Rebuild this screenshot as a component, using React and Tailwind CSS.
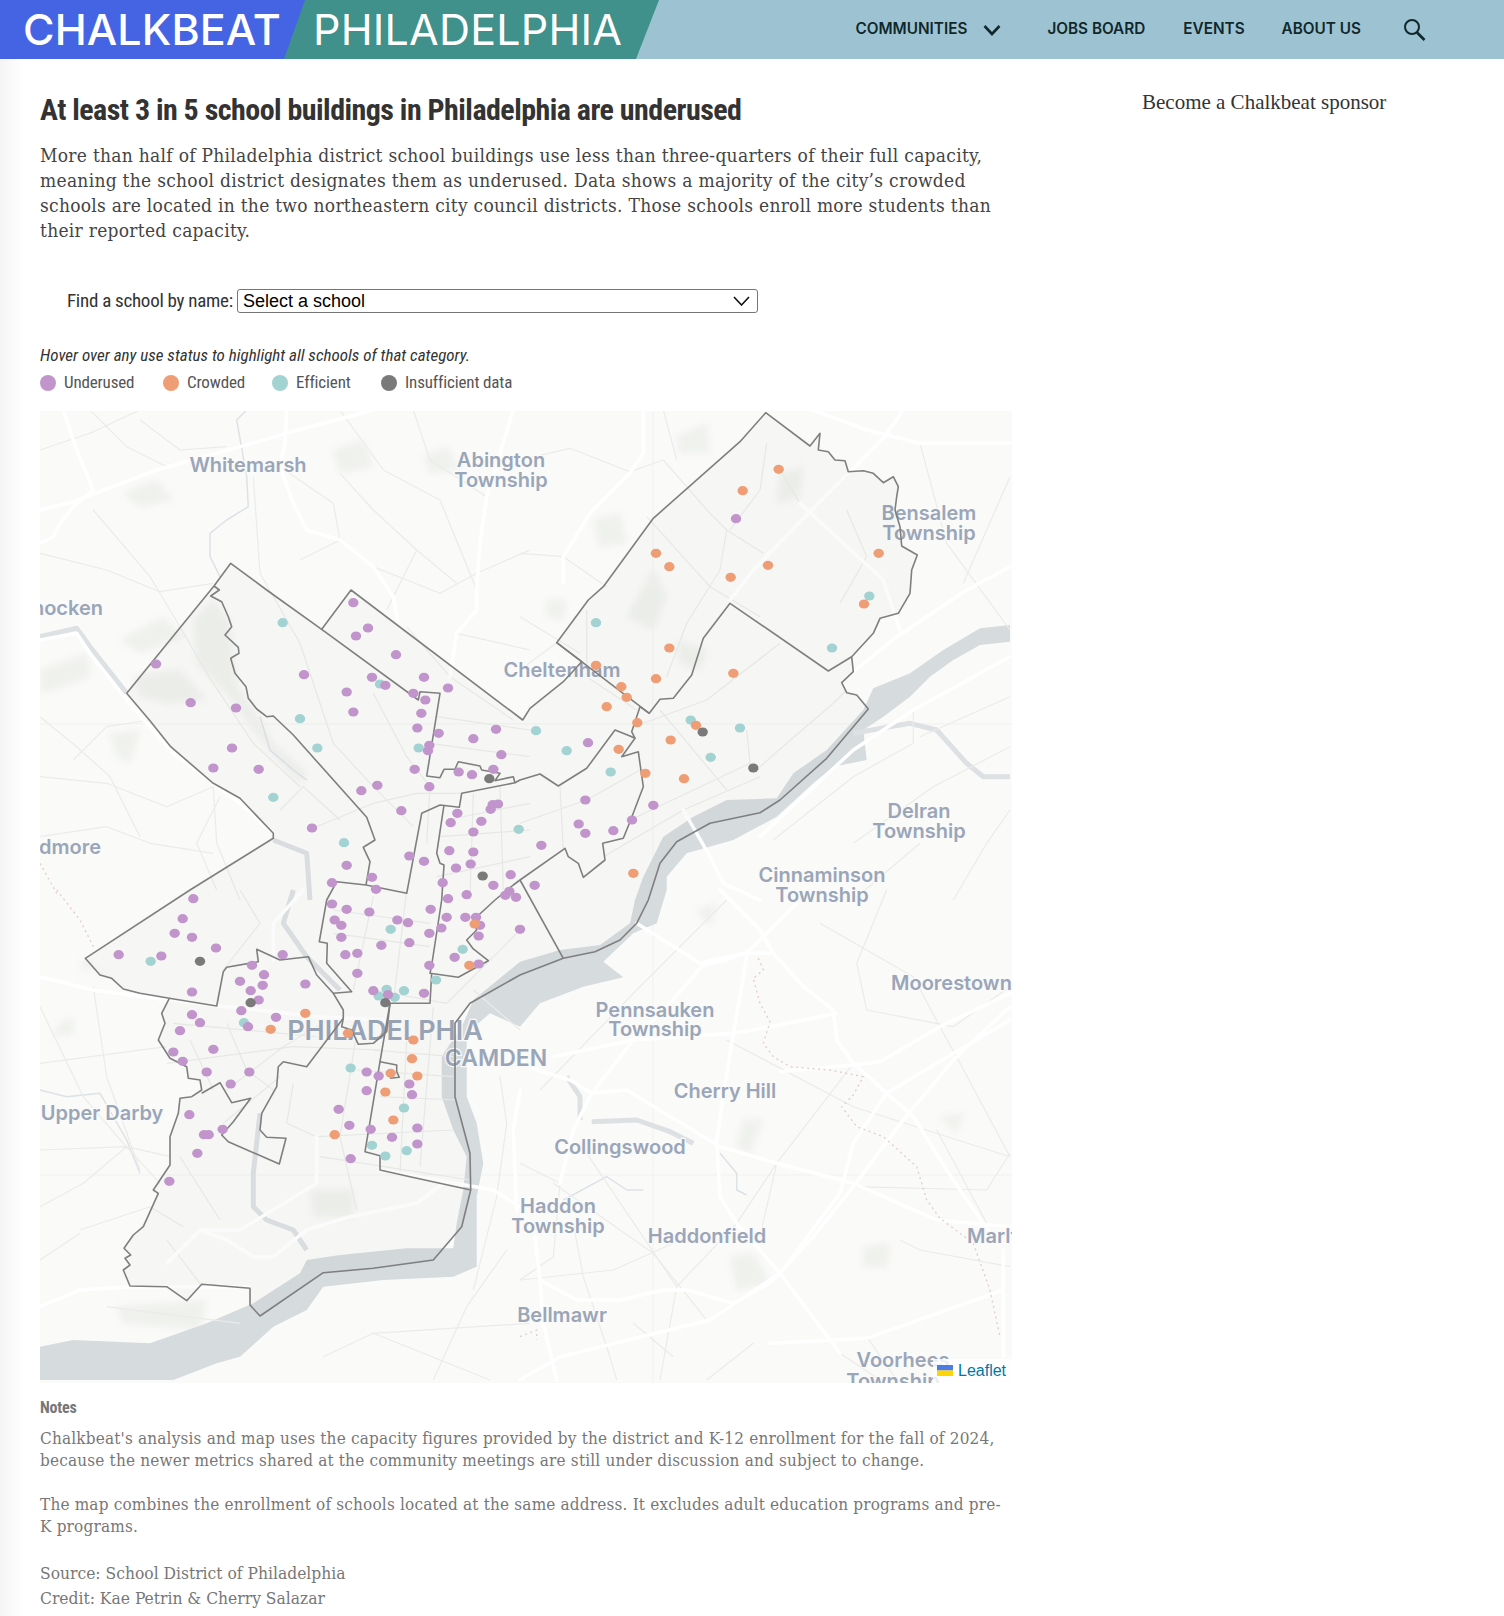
import React from "react";

// zoom frames of the map, each maps to page px at 1/3 scale
const FRAMES = { A: [40, 410], B: [520, 410], C: [40, 890], D: [520, 890] };
const pt = (f, [x, y]) => [FRAMES[f][0] + x / 3, FRAMES[f][1] + y / 3];
const seg = (f, pts) => pts.map((p) => pt(f, p));
const toD = (pts, close) =>
  "M" + pts.map(([x, y]) => `${x.toFixed(1)} ${y.toFixed(1)}`).join("L") + (close ? "Z" : "");
const line = (f, pts) => toD(seg(f, pts));

const cityOutline = [
  ...seg("A", [[572, 460], [680, 540], [845, 658], [933, 540], [1448, 930]]),
  ...seg("B", [[30, 895], [130, 815], [185, 755], [110, 698], [205, 570], [250, 530], [400, 325], [660, 95], [737, 8], [870, 108], [900, 70], [895, 120], [925, 125], [945, 150], [975, 152], [985, 185], [1030, 182], [1060, 190], [1090, 218], [1120, 200], [1135, 230], [1130, 260], [1125, 300], [1140, 350], [1145, 408], [1192, 435], [1175, 480], [1170, 550], [1135, 610], [1080, 625], [1060, 670], [995, 740], [1000, 785], [965, 818], [980, 848], [1010, 855], [1045, 897], [920, 1045], [780, 1170], [720, 1208], [570, 1240], [470, 1295], [420, 1360], [385, 1470]]),
  ...seg("D", [[350, 100], [300, 150], [225, 185], [130, 205], [0, 255]]),
  ...seg("C", [[1290, 340], [1245, 400], [1245, 620], [1290, 790], [1292, 900], [1265, 1010], [1180, 1110], [1000, 1135], [850, 1148], [660, 1278], [630, 1245], [630, 1195], [485, 1183], [440, 1232], [380, 1190], [270, 1188], [250, 1140], [270, 1125], [255, 1105], [272, 1095], [252, 1075], [280, 1035], [310, 1010], [355, 910], [340, 900], [390, 825], [390, 740], [415, 670], [420, 625], [455, 620], [485, 600], [480, 570], [445, 565], [440, 530], [390, 505], [355, 450], [375, 400], [365, 370], [388, 325], [300, 310], [250, 297], [215, 265], [180, 255], [136, 205], [450, 0]]),
  ...seg("A", [[700, 1285], [700, 1270], [600, 1165], [520, 1120], [392, 1010], [330, 932], [260, 850], [522, 528]]),
];

const innerLines = [
  line("A", [[522, 528], [538, 540], [512, 558], [545, 575], [565, 620], [575, 650], [555, 675], [595, 712], [597, 730], [572, 745], [585, 790], [618, 830], [625, 865], [650, 897], [680, 920], [700, 918], [760, 975], [980, 1222], [1005, 1290], [970, 1312], [990, 1355], [978, 1425]]),
  toD([
    ...seg("A", [[845, 658], [1135, 870], [1140, 845], [1200, 850], [1160, 1098], [1200, 1103], [1212, 1078], [1245, 1078], [1255, 1055], [1320, 1068], [1325, 1080], [1380, 1090], [1365, 1112], [1420, 1100], [1425, 1118], [1265, 1150], [1258, 1192], [1200, 1185], [1145, 1210], [1100, 1450], [978, 1425], [890, 1415]]),
    ...seg("C", [[860, 30], [838, 155], [862, 160], [860, 220], [935, 305], [880, 310], [910, 360], [910, 385], [800, 530], [730, 515], [715, 530], [710, 590], [665, 670], [660, 720], [680, 742], [738, 745], [718, 822], [565, 755], [545, 735], [580, 695], [632, 625], [575, 638], [540, 578], [485, 610]]),
  ]),
  line("C", [[388, 325], [530, 348], [550, 245], [560, 232], [655, 215], [650, 178], [720, 210], [805, 200], [830, 255], [880, 310]]),
  toD([
    ...seg("A", [[1425, 1118]]),
    ...seg("B", [[0, 1110], [60, 1092], [115, 1128], [200, 1075], [285, 960], [330, 978], [345, 985], [305, 1040], [355, 1025], [370, 1130], [330, 1235], [310, 1285], [248, 1300], [255, 1350], [190, 1402], [175, 1360], [145, 1340], [135, 1315], [0, 1410]]),
    ...seg("A", [[1420, 1425]]),
    ...seg("C", [[1365, 30], [1300, 90], [1310, 120], [1280, 150], [1298, 175], [1345, 212], [1255, 262], [1170, 250], [1175, 225], [1205, 30]]),
    ...seg("A", [[1212, 1365], [1200, 1360], [1190, 1330], [1212, 1185]]),
  ]),
  line("B", [[345, 985], [335, 965], [360, 890], [388, 910]]),
  line("B", [[110, 698], [388, 910], [420, 868], [460, 865], [515, 795], [550, 685], [630, 580], [925, 783], [995, 740]]),
  line("C", [[910, 385], [905, 410], [935, 420], [955, 463], [1000, 460], [1040, 425], [1050, 340], [1170, 340], [1175, 250]]),
  line("C", [[1050, 340], [1020, 515], [1070, 525], [1070, 545], [1078, 562], [1050, 565]]),
  line("C", [[1020, 515], [975, 785], [1020, 797], [1020, 840], [1110, 860], [1292, 900]]),
  toD([...seg("B", [[0, 1410]]), ...seg("D", [[130, 205]])]),
];

// Delaware river, one closed shape
const river = toD(
  [
    ...seg("B", [[1470, 645], [1380, 655], [1270, 720], [1170, 790], [1060, 835], [1030, 900], [920, 1020], [820, 1090], [770, 1165], [620, 1170], [520, 1220], [430, 1280], [370, 1400], [345, 1470]]),
    ...seg("D", [[330, 100], [240, 165], [120, 180], [0, 215]]),
    ...seg("C", [[1300, 330], [1270, 400], [1205, 500], [1205, 620], [1240, 720], [1280, 800], [1270, 900], [1250, 1000], [1240, 1075], [1100, 1075], [900, 1095], [800, 1110], [780, 1150], [640, 1240], [500, 1300], [330, 1360], [100, 1350], [0, 1370], [0, 1470], [330, 1470], [400, 1470], [530, 1420], [600, 1400], [700, 1310], [800, 1260], [850, 1190], [1030, 1170], [1240, 1160], [1310, 1130], [1310, 920], [1330, 820], [1310, 700], [1280, 620], [1280, 430], [1350, 370]]),
    ...seg("D", [[0, 410], [60, 340], [190, 290], [310, 262], [250, 215], [340, 130], [410, 100], [440, 0]]),
    ...seg("B", [[440, 1400], [500, 1330], [640, 1290], [770, 1220], [880, 1120], [940, 1070], [1040, 1050], [1030, 960], [1090, 920], [1170, 860], [1230, 800], [1300, 750], [1380, 705], [1470, 695]]),
  ],
  true
);

const smallWater = [
  line("A", [[0, 680], [110, 655], [150, 710], [260, 850]]),
  line("A", [[700, 1290], [800, 1330], [810, 1470]]),
  line("C", [[760, 0], [730, 100], [800, 200], [900, 300]]),
  line("C", [[660, 670], [640, 850], [640, 950], [680, 990], [760, 1020], [800, 1080]]),
  line("B", [[1000, 970], [1170, 940], [1250, 960], [1340, 1060], [1390, 1100], [1470, 1100]]),
  line("D", [[215, 695], [350, 690], [450, 725], [520, 760]]),
  line("D", [[140, 560], [180, 620], [180, 690]]),
];

const thinWater = [
  line("A", [[620, 0], [590, 30], [620, 200], [625, 290], [560, 330], [510, 370], [510, 440], [540, 500]]),
  line("A", [[660, 920], [690, 1020], [760, 1080], [800, 1110]]),
  line("D", [[600, 790], [650, 850], [650, 900], [680, 915]]),
  line("D", [[130, 930], [260, 860], [320, 900], [370, 900]]),
  line("C", [[0, 600], [80, 620], [180, 610], [260, 750], [300, 850]]),
];

const majorRoads = [
  line("A", [[0, 300], [100, 275], [350, 180], [600, 110], [740, 70], [1000, 0]]),
  line("A", [[70, 0], [110, 120], [160, 240], [100, 290], [60, 340], [40, 380], [0, 400]]),
  line("A", [[740, 0], [735, 100], [720, 170], [760, 280], [800, 360], [900, 390], [1000, 470], [1060, 560], [1075, 640]]),
  line("A", [[0, 690], [110, 670], [150, 730], [260, 870], [400, 1030], [600, 1180], [700, 1270]]),
  line("A", [[1420, 0], [1340, 260], [1320, 400], [1310, 540], [1310, 600], [1250, 670], [1230, 800]]),
  line("B", [[880, 0], [1040, 60], [1200, 100], [1470, 100]]),
  line("B", [[1150, 0], [1090, 85], [870, 305], [700, 480], [630, 570]]),
  line("B", [[840, 280], [1090, 510], [1140, 660]]),
  line("B", [[1470, 470], [1340, 540], [1130, 680], [970, 810]]),
  line("B", [[370, 0], [370, 130], [330, 190], [210, 310], [130, 440], [130, 520]]),
  line("B", [[490, 1200], [570, 1340], [610, 1420], [720, 1470]]),
  line("B", [[1470, 740], [1180, 900], [1000, 1020], [720, 1280]]),
  line("D", [[600, 0], [720, 120], [760, 190], [850, 290], [940, 360], [950, 450], [1000, 520], [1180, 680], [1300, 870], [1430, 1060]]),
  line("D", [[1470, 350], [1300, 510], [1150, 690], [1000, 890], [880, 1040], [750, 1180], [640, 1240], [500, 1200], [430, 1200], [300, 1230], [170, 1230], [60, 1170]]),
  line("D", [[1470, 390], [1300, 490], [1100, 610], [1000, 760], [960, 910], [780, 1150]]),
  line("D", [[350, 100], [540, 220], [620, 200], [690, 190], [760, 190]]),
  line("D", [[830, 40], [690, 180], [620, 210], [550, 225], [450, 340], [340, 450], [215, 610], [160, 720], [120, 880]]),
  line("D", [[215, 610], [320, 600], [600, 770], [770, 820], [1000, 880], [1250, 990], [1470, 1010]]),
  line("D", [[0, 510], [50, 540], [150, 570], [215, 610]]),
  line("D", [[100, 500], [340, 450], [640, 430], [750, 410], [950, 370]]),
  line("D", [[780, 545], [1000, 525], [1080, 515], [1260, 410], [1470, 310]]),
  line("D", [[680, 200], [630, 490], [590, 750], [600, 920], [650, 1000], [780, 1150], [960, 1390]]),
  line("D", [[45, 1040], [60, 1170], [70, 1300], [110, 1470]]),
  line("D", [[0, 1470], [120, 1400], [570, 1290], [780, 1150]]),
  line("D", [[750, 1360], [1040, 1345], [1450, 1200]]),
  line("D", [[1450, 1080], [1450, 1400]]),
  line("C", [[0, 260], [160, 300], [380, 330], [830, 380], [1030, 390]]),
  line("C", [[480, 1020], [560, 1050], [640, 1100], [700, 1100], [800, 1020], [930, 980], [1130, 940], [1210, 880]]),
  line("C", [[0, 1250], [120, 1200], [270, 1190], [630, 1190]]),
  line("C", [[830, 740], [830, 880], [600, 1020], [480, 1020], [380, 1120]]),
  line("C", [[1020, 840], [1360, 900], [1440, 950]]),
  line("C", [[1440, 600], [1420, 720], [1430, 960]]),
  line("C", [[790, 0], [700, 100], [700, 210]]),
];

const minorRoads = [
  line("A", [[0, 120], [150, 70], [300, 0]]), line("A", [[160, 300], [330, 500], [420, 650], [500, 790], [640, 1000], [780, 1130]]),
  line("A", [[0, 430], [200, 480], [360, 545], [520, 520]]), line("A", [[640, 200], [660, 490], [780, 700], [880, 1000], [1000, 1130], [1120, 1250]]),
  line("A", [[900, 0], [1030, 180], [1200, 270], [1310, 540]]), line("A", [[1000, 470], [1200, 550], [1310, 490], [1470, 420]]),
  line("A", [[780, 450], [900, 390], [880, 280], [720, 170]]), line("A", [[1100, 650], [1230, 800], [1420, 930]]),
  line("A", [[0, 1100], [200, 1120], [380, 1190], [520, 1130]]), line("A", [[0, 1280], [200, 1250], [330, 1300], [520, 1330]]),
  line("A", [[520, 1130], [530, 1300], [600, 1470]]), line("A", [[100, 1050], [200, 950], [330, 930]]),
  line("A", [[830, 1250], [1000, 1180], [1130, 1150], [1265, 1150]]), line("A", [[1190, 920], [1470, 960]]),
  line("A", [[1170, 1000], [1470, 1040]]), line("A", [[1000, 850], [1100, 1040], [1170, 1130], [1160, 1300]]),
  line("A", [[720, 1200], [790, 1130], [900, 1230]]), line("A", [[1220, 1230], [1470, 1180]]),
  line("A", [[1200, 1280], [1470, 1260]]), line("A", [[1190, 1400], [1470, 1340]]),
  line("A", [[1300, 1150], [1290, 1470]]), line("A", [[1380, 1130], [1390, 1440]]),
  line("A", [[150, 0], [260, 110], [380, 170]]), line("A", [[300, 30], [420, 120], [560, 110]]),
  line("A", [[900, 190], [1000, 300], [1130, 420], [1250, 520]]), line("A", [[1120, 0], [1170, 150], [1340, 260]]),
  line("A", [[1130, 420], [1040, 600]]), line("A", [[1250, 670], [1470, 720]]),
  line("A", [[0, 920], [110, 1010], [210, 1100], [300, 1280]]), line("A", [[540, 1160], [470, 1300], [530, 1440]]),
  line("B", [[0, 150], [150, 115], [330, 185], [430, 150]]), line("B", [[430, 150], [570, 310], [620, 360], [730, 430]]),
  line("B", [[620, 360], [600, 480], [500, 640], [440, 800]]), line("B", [[740, 100], [720, 240], [630, 360]]),
  line("B", [[780, 180], [840, 280]]), line("B", [[380, 320], [570, 530], [720, 620]]),
  line("B", [[200, 600], [200, 800], [350, 900]]), line("B", [[0, 620], [180, 730]]),
  line("B", [[1470, 200], [1330, 520]]), line("B", [[1200, 100], [1280, 400], [1470, 660]]),
  line("B", [[420, 900], [620, 1140]]), line("B", [[370, 940], [560, 870], [780, 700]]),
  line("B", [[680, 960], [690, 1060], [500, 1150], [330, 1230]]), line("B", [[720, 1070], [800, 1000], [940, 880], [980, 840]]),
  line("B", [[1000, 1300], [1240, 1130], [1470, 1010]]), line("B", [[1180, 900], [1180, 1000], [1000, 1100], [760, 1290]]),
  line("B", [[0, 1240], [200, 1170], [360, 1080]]), line("B", [[120, 1130], [130, 1320]]),
  line("B", [[250, 1340], [490, 1200], [720, 1100]]), line("B", [[1470, 860], [1200, 980]]),
  line("B", [[0, 430], [130, 440], [260, 530]]), line("B", [[0, 780], [110, 698]]),
  line("B", [[430, 0], [470, 150]]), line("B", [[980, 300], [1040, 440], [960, 580]]),
  line("B", [[1300, 1470], [1400, 1300], [1470, 1200]]), line("B", [[1000, 1470], [1200, 1300]]),
  line("D", [[1040, 360], [1300, 410], [1470, 290]]), line("D", [[620, 450], [1000, 650], [1470, 800]]),
  line("D", [[100, 880], [400, 1090], [560, 1290]]), line("D", [[180, 760], [470, 1190], [420, 1470]]),
  line("D", [[470, 1190], [650, 1000], [770, 820], [720, 1040]]), line("D", [[770, 820], [1000, 520]]),
  line("D", [[160, 1000], [190, 1160], [260, 1370], [290, 1470]]), line("D", [[0, 1170], [280, 1140], [460, 1060]]),
  line("D", [[1140, 1050], [1200, 1080], [1470, 1130]]), line("D", [[1260, 410], [1320, 520], [1470, 800]]),
  line("D", [[1250, 720], [1400, 1000]]), line("D", [[1040, 1340], [1130, 1470]]),
  line("D", [[960, 1390], [1080, 1470]]), line("D", [[1000, 890], [1400, 900], [1470, 790]]),
  line("D", [[340, 1300], [460, 1400]]), line("D", [[700, 1360], [560, 1470]]),
  line("D", [[620, 30], [350, 300], [60, 600]]), line("D", [[0, 820], [120, 880], [100, 1100], [0, 1170]]),
  line("D", [[1100, 0], [1010, 220], [1040, 360]]), line("D", [[900, 100], [1180, 260], [1260, 410]]),
  line("C", [[0, 520], [380, 470]]), line("C", [[0, 350], [130, 620], [250, 760], [360, 880]]),
  line("C", [[0, 780], [260, 770], [390, 800]]), line("C", [[0, 950], [130, 880], [260, 770]]),
  line("C", [[120, 1020], [330, 950], [430, 1010]]), line("C", [[160, 290], [200, 560], [300, 840]]),
  line("C", [[420, 800], [540, 990]]), line("C", [[600, 0], [660, 100], [550, 240]]),
  line("C", [[400, 400], [830, 440]]), line("C", [[380, 520], [760, 470], [1020, 480]]),
  line("C", [[560, 600], [730, 470], [880, 380]]), line("C", [[550, 700], [720, 560]]),
  line("C", [[760, 580], [740, 700], [830, 740]]), line("C", [[1000, 300], [1220, 340], [1440, 120]]),
  line("C", [[1100, 0], [1060, 340]]), line("C", [[1000, 20], [940, 300]]),
  line("C", [[950, 430], [900, 740], [950, 960]]), line("C", [[1100, 450], [1080, 850]]),
  line("C", [[840, 800], [1290, 870]]), line("C", [[1180, 350], [1140, 830]]),
  line("C", [[830, 740], [1240, 720]]), line("C", [[1000, 480], [1240, 500]]),
  line("C", [[1020, 620], [1250, 630]]), line("C", [[1380, 560], [1400, 700], [1370, 920], [1300, 1200]]),
  line("C", [[1400, 1080], [1280, 1250], [1180, 1470]]), line("C", [[1000, 1330], [1470, 1300]]),
  line("C", [[850, 1400], [1000, 1330], [1350, 1470]]), line("C", [[200, 1250], [600, 1300]]),
  line("C", [[1300, 300], [1440, 420]]), line("C", [[0, 1110], [120, 1030]]),
  line("C", [[880, 60], [1170, 100]]), line("C", [[880, 130], [1170, 170]]),
  line("C", [[950, 540], [1240, 560]]), line("C", [[560, 400], [620, 540], [700, 600]]),
  line("C", [[450, 450], [520, 600]]), line("C", [[380, 1050], [480, 1180]]),
];

const parks = [
  seg("A", [[0, 780], [140, 730], [150, 800], [40, 840], [0, 850]]),
  seg("A", [[240, 690], [370, 620], [430, 680], [300, 730]]),
  seg("A", [[460, 630], [520, 570], [570, 640], [590, 830], [640, 900], [700, 1000], [800, 1090], [780, 1120], [720, 1060], [640, 960], [560, 850], [470, 760]]),
  seg("A", [[280, 800], [420, 780], [500, 870], [380, 880], [300, 860]]),
  seg("A", [[210, 970], [300, 960], [270, 1060], [230, 1040]]),
  seg("A", [[880, 120], [970, 90], [1000, 170], [900, 190]]),
  seg("A", [[1150, 140], [1220, 110], [1260, 180], [1170, 190]]),
  seg("A", [[250, 250], [350, 210], [400, 270], [300, 290]]),
  seg("B", [[320, 620], [400, 480], [440, 560], [400, 660]]),
  seg("B", [[80, 570], [140, 570], [130, 630], [80, 620]]),
  seg("B", [[220, 330], [300, 310], [320, 400], [240, 410]]),
  seg("B", [[470, 80], [560, 40], [570, 130], [480, 130]]),
  seg("B", [[470, 690], [560, 720], [540, 780], [480, 760]]),
  seg("B", [[780, 190], [850, 170], [840, 260], [770, 280]]),
  seg("C", [[120, 230], [200, 250], [180, 255], [136, 205]]),
  seg("C", [[810, 900], [940, 900], [940, 980], [820, 980]]),
  seg("C", [[60, 400], [100, 380], [100, 430], [40, 440]]),
  seg("C", [[230, 1250], [500, 1230], [480, 1320], [250, 1300]]),
  seg("D", [[630, 1100], [700, 1090], [750, 1180], [650, 1200]]),
  seg("D", [[1030, 1070], [1110, 1060], [1100, 1130], [1030, 1130]]),
  seg("D", [[670, 690], [730, 690], [690, 790], [650, 770]]),
  seg("D", [[1260, 680], [1330, 670], [1310, 730]]),
  seg("D", [[530, 60], [590, 40], [570, 110]]),
];

const trails = [
  line("A", [[0, 1360], [50, 1450]]),
  line("C", [[50, 0], [120, 90], [160, 170]]),
  line("D", [[715, 205], [730, 240], [700, 265], [720, 340], [750, 395], [730, 460], [760, 500], [810, 530], [930, 540], [1030, 560], [1000, 615], [965, 650], [1010, 710], [1090, 740], [1190, 830], [1220, 930], [1260, 985], [1360, 1060], [1410, 1200], [1440, 1340]]),
  line("D", [[0, 1340], [50, 1320], [50, 1350]]),
];

const DOTS = {
  purple: {
    A: [[348,762],[452,878],[588,894],[576,1014],[520,1074],[656,1078],[792,794],[940,578],[984,654],[948,678],[1068,734],[996,802],[1036,826],[1152,802],[1224,834],[920,846],[940,906],[1120,850],[1156,870],[1144,910],[1132,954],[1196,970],[1168,1006],[1164,1022],[1300,986],[1368,958],[1384,1034],[1124,1078],[1256,1086],[1296,1094],[1360,1078],[1168,1130],[1012,1126],[964,1142],[1084,1202],[816,1254],[1252,1210],[1232,1238],[1324,1234],[1300,1266],[1352,1198],[1358,1184],[1374,1182],[1228,1322],[1300,1326],[1292,1362],[1248,1374],[1108,1338],[1152,1354],[920,1366],[996,1402],[876,1418],[1008,1438],[1208,1418],[1412,1394],[1360,1426]],
    B: [[648,326],[204,998],[196,1170],[400,1186],[336,1230],[176,1242],[196,1270],[280,1262],[64,1306],[44,1426]],
    C: [[460,26],[428,86],[404,130],[456,142],[528,174],[236,194],[364,198],[728,194],[636,226],[672,254],[600,274],[668,286],[632,302],[656,330],[796,282],[456,306],[604,362],[456,374],[480,398],[708,382],[624,410],[420,422],[400,486],[428,514],[520,478],[500,546],[628,546],[572,582],[448,674],[548,718],[492,734],[506,734],[472,790],[388,874],[876,42],[920,58],[988,66],[884,90],[904,106],[904,142],[1072,90],[1104,98],[1172,58],[1224,26],[1280,14],[1220,82],[1276,82],[1308,82],[1320,106],[1204,114],[1168,130],[1108,158],[1024,166],[1316,138],[1440,118],[916,194],[952,190],[952,250],[1168,226],[1244,202],[1316,222],[1000,302],[1044,314],[1152,310],[1396,16],[1408,4],[1428,22],[980,546],[1016,558],[980,602],[1108,582],[1116,614],[896,658],[928,706],[992,718],[1132,714],[1056,742],[1132,762],[932,806]],
  },
  orange: {
    B: [[776,178],[668,242],[408,430],[448,470],[632,502],[744,466],[1076,430],[1032,582],[448,714],[228,766],[408,806],[640,790],[304,830],[320,862],[260,890],[352,938],[528,946],[452,990],[296,1018],[376,1090],[492,1106],[340,1390]],
    C: [[796,370],[692,418],[924,430],[1120,450],[1116,506],[1052,550],[1132,558],[1036,606],[1060,690],[884,734],[1288,226],[1304,102]],
  },
  teal: {
    A: [[728,638],[1020,822],[780,926],[832,1014],[700,1162],[1136,1014],[912,1298],[1436,1258]],
    B: [[1048,558],[228,638],[936,714],[512,930],[660,954],[48,962],[140,1022],[572,1042],[272,1086]],
    C: [[332,214],[612,398],[1052,118],[1268,178],[1188,270],[1040,298],[1016,318],[1064,322],[1092,302],[932,534],[1092,654],[996,766],[1036,798],[1100,782]],
  },
  gray: {
    A: [[1348,1106],[1328,1398]],
    B: [[548,966],[700,1074]],
    C: [[480,214],[632,338],[1036,338]],
  },
};

const DOT_COLORS = { teal: "#a3d2d3", purple: "#c195cc", orange: "#ef9d74", gray: "#7a7a7a" };

const allDots = ["teal", "purple", "orange", "gray"].flatMap((kind) =>
  Object.entries(DOTS[kind]).flatMap(([f, pts]) =>
    pts.map((p) => {
      const [cx, cy] = pt(f, p);
      return { cx, cy, fill: DOT_COLORS[kind] };
    })
  )
);

// [text, x, baseline, anchor, size]
const LABELS = [
  ["Whitemarsh", 248, 472, "middle", 20],
  ["Abington", 501, 467, "middle", 20],
  ["Township", 501, 487, "middle", 20],
  ["Bensalem", 929, 520, "middle", 20],
  ["Township", 929, 540, "middle", 20],
  ["Conshohocken", 103, 615, "end", 20],
  ["Cheltenham", 562, 677, "middle", 20],
  ["Ardmore", 101, 854, "end", 20],
  ["Delran", 919, 818, "middle", 20],
  ["Township", 919, 838, "middle", 20],
  ["Cinnaminson", 822, 882, "middle", 20],
  ["Township", 822, 902, "middle", 20],
  ["Moorestown", 891, 990, "start", 20],
  ["Pennsauken", 655, 1017, "middle", 20],
  ["Township", 655, 1036, "middle", 20],
  ["PHILADELPHIA", 385, 1040, "middle", 27],
  ["CAMDEN", 496, 1066, "middle", 23],
  ["Upper Darby", 102, 1120, "middle", 20],
  ["Cherry Hill", 725, 1098, "middle", 20],
  ["Collingswood", 620, 1154, "middle", 20],
  ["Haddon", 558, 1213, "middle", 20],
  ["Township", 558, 1233, "middle", 20],
  ["Haddonfield", 707, 1243, "middle", 20],
  ["Bellmawr", 562, 1322, "middle", 20],
  ["Marlton", 967, 1243, "start", 20],
  ["Voorhees", 903, 1367, "middle", 20],
  ["Township", 893, 1388, "middle", 20],
];

const PhillyMap = () => (
  <div className="relative w-[972px] h-[972px] overflow-hidden bg-[#fafaf9]">
    <svg viewBox="40 411 972 972" className="block w-full h-full" fill="none">
      <g className="blur-[3px]">
        {parks.map((p, i) => (
          <path key={i} d={toD(p, true)} fill="#eff1ed" />
        ))}
      </g>
      <path d="M653 411V1383M40 724H1012M40 1175H1012" stroke="#f1f1ef" strokeWidth="1" />
      <g className="blur-[0.5px]">
        <path d={river} fill="#d6dbde" />
        {smallWater.map((d, i) => (
          <path key={i} d={d} stroke="#dde1e4" strokeWidth="5" strokeLinejoin="round" />
        ))}
        {thinWater.map((d, i) => (
          <path key={i} d={d} stroke="#dde2e7" strokeWidth="1.5" strokeLinejoin="round" />
        ))}
        {minorRoads.map((d, i) => (
          <path key={i} d={d} stroke="#ebebe9" strokeWidth="1.2" strokeLinejoin="round" />
        ))}
        {majorRoads.map((d, i) => (
          <path key={i} d={d} stroke="#ffffff" strokeWidth="3.5" strokeLinejoin="round" strokeLinecap="round" />
        ))}
        {trails.map((d, i) => (
          <path key={i} d={d} stroke="#e3cdd2" strokeWidth="1.4" strokeDasharray="2 3.5" />
        ))}
      </g>
      {LABELS.map(([text, x, y, anchor, size], i) => (
        <text
          key={i}
          x={x}
          y={y}
          textAnchor={anchor}
          fontSize={size}
          fontWeight="600"
          fontFamily="Inter, sans-serif"
          fill="#9aa6b8"
          stroke="#fafafa"
          strokeWidth="2.5"
          paintOrder="stroke"
        >
          {text}
        </text>
      ))}
      <path d={toD(cityOutline, true)} fill="#3a3a3a" fillOpacity="0.02" stroke="#7f7f7f" strokeWidth="1.6" strokeLinejoin="round" />
      {innerLines.map((d, i) => (
        <path key={i} d={d} stroke="#7f7f7f" strokeWidth="1.6" strokeLinejoin="round" />
      ))}
      {allDots.map((d, i) => (
        <ellipse key={i} cx={d.cx} cy={d.cy} rx="5.2" ry="4.6" fill={d.fill} />
      ))}
    </svg>
    {/* leaflet attribution */}
    <div className="absolute right-0 bottom-0 h-[24px] w-[79px] bg-white/80 flex items-center pl-[4px] gap-[5px] font-['Liberation_Sans',sans-serif] text-[16px] text-[#0078a8]">
      <svg width="16" height="11" viewBox="0 0 16 11">
        <rect width="16" height="5.5" fill="#4c7be1" />
        <rect y="5.5" width="16" height="5.5" fill="#ffd500" />
      </svg>
      <span>Leaflet</span>
    </div>
  </div>
);

const LEGEND = [
  { label: "Underused", color: "bg-[#c195cc]", width: "w-[123px]" },
  { label: "Crowded", color: "bg-[#ef9d74]", width: "w-[109px]" },
  { label: "Efficient", color: "bg-[#a3d2d3]", width: "w-[109px]" },
  { label: "Insufficient data", color: "bg-[#7a7a7a]", width: "w-[140px]" },
];

const narrow = "font-['Roboto_Condensed','Roboto',sans-serif]";
const serif = "font-['DejaVu_Serif_Condensed','DejaVu_Serif',serif]";

const App = () => {
  return (
    <div className="min-h-[1616px] bg-[linear-gradient(to_right,#f5f5f5,#ffffff_24px)]">
      <header className="flex items-center justify-between h-[59px] bg-[#9dc3d2]">
        <div className="flex h-full w-[659px] bg-[#40908c] [clip-path:polygon(0_0,100%_0,calc(100%-23px)_100%,0_100%)]">
          <div className="flex items-center h-full w-[305px] pl-[23px] bg-[#4464e4] [clip-path:polygon(0_0,100%_0,calc(100%-21px)_100%,0_100%)]">
            <span className="font-['Inter',sans-serif] font-medium text-[43px] leading-none text-white tracking-[0.1px] whitespace-nowrap">CHALKBEAT</span>
          </div>
          <span className="self-center pl-[8px] font-['Inter',sans-serif] text-[43px] leading-none text-white tracking-[0.2px] whitespace-nowrap">PHILADELPHIA</span>
        </div>
        <nav className="flex items-center mr-[78px] font-['Inter',sans-serif] font-semibold text-[15.3px] text-[#10282c]">
          <span>COMMUNITIES</span>
          <svg className="ml-[16px]" width="18" height="12" viewBox="0 0 18 12" fill="none" stroke="#10282c" strokeWidth="2.6">
            <path d="M1.5 2L9 10L16.5 2" />
          </svg>
          <span className="ml-[46px]">JOBS BOARD</span>
          <span className="ml-[38px]">EVENTS</span>
          <span className="ml-[37px]">ABOUT US</span>
          <svg className="ml-[42px]" width="23" height="23" viewBox="0 0 23 23" fill="none" stroke="#10282c" strokeWidth="2">
            <circle cx="9" cy="9" r="7" />
            <path d="M14 14.5L21.5 22" strokeWidth="2.6" />
          </svg>
        </nav>
      </header>

      <main className="flex">
        <div className="ml-[40px] w-[972px] flex flex-col">
          <h1 className={`mt-[32px] h-[38px] ${narrow} font-bold text-[30px] leading-[38px] tracking-[-0.52px] text-[#333333] whitespace-nowrap`}>
            At least 3 in 5 school buildings in Philadelphia are underused
          </h1>
          <p className={`mt-[14px] w-[960px] ${serif} text-[19px] leading-[25px] tracking-[0.28px] text-[#444444]`}>
            More than half of Philadelphia district school buildings use less than three-quarters of their full capacity, meaning the school district designates them as underused. Data shows a majority of the city’s crowded schools are located in the two northeastern city council districts. Those schools enroll more students than their reported capacity.
          </p>
          <div className="mt-[44px] ml-[27px] flex items-center gap-[4px]">
            <label className={`${narrow} text-[19px] tracking-[-0.27px] text-[#333333] whitespace-nowrap`}>Find a school by name:</label>
            <div className="relative w-[521px] h-[24px]">
              <select className="appearance-none w-full h-full rounded-[3px] border border-[#767676] bg-white pl-[5px] font-['Liberation_Sans',sans-serif] text-[18px] leading-none text-black">
                <option>Select a school</option>
              </select>
              <svg className="absolute right-[8px] top-[7px] pointer-events-none" width="17" height="10" viewBox="0 0 17 10" fill="none" stroke="#111111" strokeWidth="1.6">
                <path d="M1 1L8.5 9L16 1" />
              </svg>
            </div>
          </div>
          <p className={`mt-[27px] ${narrow} italic text-[17px] leading-[24px] text-[#333333]`}>
            Hover over any use status to highlight all schools of that category.
          </p>
          <div className="mt-[4px] flex items-center h-[24px]">
            {LEGEND.map((item) => (
              <div key={item.label} className={`flex items-center gap-[8px] shrink-0 ${item.width}`}>
                <span className={`shrink-0 w-[16px] h-[16px] rounded-full ${item.color}`} />
                <span className={`${narrow} text-[17px] tracking-[-0.15px] leading-none text-[#555555] whitespace-nowrap`}>{item.label}</span>
              </div>
            ))}
          </div>
          <div className="mt-[16px]">
            <PhillyMap />
          </div>
          <h2 className={`mt-[15px] ${narrow} font-bold text-[16px] leading-[20px] tracking-[-0.2px] text-[#777777]`}>Notes</h2>
          <div className={`mt-[9px] ${serif} text-[17px] leading-[22px] tracking-[0.18px] text-[#777777]`}>
            <p>Chalkbeat's analysis and map uses the capacity figures provided by the district and K-12 enrollment for the fall of 2024, because the newer metrics shared at the community meetings are still under discussion and subject to change.</p>
            <p className="mt-[22px]">The map combines the enrollment of schools located at the same address. It excludes adult education programs and pre-K programs.</p>
          </div>
          <p className={`mt-[24px] ${serif} text-[17.3px] leading-[25px] text-[#777777]`}>
            Source: School District of Philadelphia
            <br />
            Credit: Kae Petrin &amp; Cherry Salazar
          </p>
        </div>
        <aside className="ml-[130px] mt-[30px]">
          <span className="font-['Liberation_Serif',serif] text-[21px] leading-[26px] text-[#333333] whitespace-nowrap">Become a Chalkbeat sponsor</span>
        </aside>
      </main>
    </div>
  );
};

export default App;
